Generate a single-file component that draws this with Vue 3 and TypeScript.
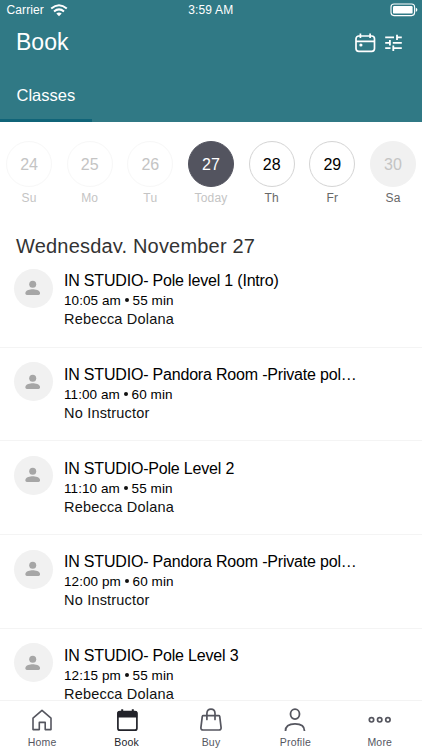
<script setup lang="ts">
interface Day { num: number; label: string; state: 'past' | 'today' | 'open' | 'closed' }
interface Lesson { title: string; time: string; minutes: number; teacher: string }

const days: Day[] = [
  { num: 24, label: 'Su', state: 'past' },
  { num: 25, label: 'Mo', state: 'past' },
  { num: 26, label: 'Tu', state: 'past' },
  { num: 27, label: 'Today', state: 'today' },
  { num: 28, label: 'Th', state: 'open' },
  { num: 29, label: 'Fr', state: 'open' },
  { num: 30, label: 'Sa', state: 'closed' },
]

const lessons: Lesson[] = [
  { title: 'IN STUDIO- Pole level 1 (Intro)', time: '10:05 am', minutes: 55, teacher: 'Rebecca Dolana' },
  { title: 'IN STUDIO- Pandora Room -Private pol…', time: '11:00 am', minutes: 60, teacher: 'No Instructor' },
  { title: 'IN STUDIO-Pole Level 2', time: '11:10 am', minutes: 55, teacher: 'Rebecca Dolana' },
  { title: 'IN STUDIO- Pandora Room -Private pol…', time: '12:00 pm', minutes: 60, teacher: 'No Instructor' },
  { title: 'IN STUDIO- Pole Level 3', time: '12:15 pm', minutes: 55, teacher: 'Rebecca Dolana' },
]
</script>

<template>
  <div class="screen">
    <header class="header">
      <div class="status">
        <div class="carrier">
          <span>Carrier</span>
          <svg width="18" height="13" viewBox="0 0 18 13" fill="none" stroke="#fff" stroke-width="2">
            <path d="M1.2 4.5Q9 -2 16.8 4.5M4 7.4Q9 3.3 14 7.4" />
            <path d="M6.3 9.5Q9 7.3 11.7 9.5L9 12.3Z" fill="#fff" stroke="none" />
          </svg>
        </div>
        <span class="clock">3:59 AM</span>
        <svg class="battery" width="28" height="14" viewBox="0 0 28 14" fill="none">
          <rect x="1" y="1" width="23.6" height="11.6" rx="3" stroke="#fff" stroke-width="1.1" />
          <rect x="3" y="3" width="19.6" height="7.6" rx="1.2" fill="#fff" />
          <path d="M25.8 4.7Q27.4 5.3 27.4 6.8T25.8 8.9Z" fill="#fff" />
        </svg>
      </div>
      <div class="title-row">
        <h1>Book</h1>
        <div class="actions">
          <svg width="21" height="20" viewBox="0 0 21 20" fill="none" stroke="#fff" stroke-width="1.7">
            <rect x="1" y="3" width="18.5" height="15.3" rx="2.8" />
            <path d="M1 8.4H19.5M5.4 .5V5M15.1 .5V5" />
            <circle cx="5.9" cy="12" r="1.6" fill="#fff" stroke="none" />
          </svg>
          <svg width="17" height="18" viewBox="0 0 17 18" fill="none" stroke="#fff" stroke-width="1.8">
            <path d="M.2 3.4H9M12 3.4H16.8M12 .7V6.1M.2 8.8H5M7.8 8.8H16.8M4.9 6.1V11.5M.2 14.2H5.5M8.3 14.2H16.8M8.3 11.5V16.9" />
          </svg>
        </div>
      </div>
      <nav class="tabs"><span class="tab">Classes</span></nav>
    </header>

    <section class="days">
      <div v-for="d in days" :key="d.num" class="day" :class="d.state">
        <span class="num">{{ d.num }}</span>
        <span class="label">{{ d.label }}</span>
      </div>
    </section>

    <main class="agenda">
      <h2>Wednesday, November 27</h2>
      <article v-for="(l, i) in lessons" :key="i" class="lesson">
        <div class="avatar">
          <svg width="16" height="16" viewBox="0 0 16 16" fill="#a6a6a6">
            <circle cx="7.7" cy="4.2" r="3.5" />
            <path d="M.4 13C.4 10.2 5.2 9.3 7.7 9.3S15 10.2 15 13V13.6Q15 15 13.6 15H1.8Q.4 15 .4 13.6Z" />
          </svg>
        </div>
        <div class="info">
          <h3>{{ l.title }}</h3>
          <p class="when">{{ l.time }} <i class="dot"></i> {{ l.minutes }} min</p>
          <p class="teacher">{{ l.teacher }}</p>
        </div>
      </article>
    </main>

    <nav class="bottom">
      <div class="item">
        <svg width="22" height="24" viewBox="0 0 22 24" fill="none" stroke="#55565f" stroke-width="1.6" stroke-linejoin="round">
          <path d="M2 10.2L11 2.3L20 10.2V21.6H14.2V14.4H8.3V21.6H2Z" />
        </svg>
        <span>Home</span>
      </div>
      <div class="item active">
        <svg width="22" height="24" viewBox="0 0 22 24" fill="none" stroke="#22232a" stroke-width="1.7">
          <rect x="1.9" y="3.6" width="19" height="18.6" rx="2" />
          <path d="M1.5 9.6V4.9Q1.5 2.9 3.5 2.9H19.3Q21.3 2.9 21.3 4.9V9.6Z" fill="#22232a" stroke="none" />
          <path d="M6.2 1.2V4M16.8 1.2V4" stroke-width="2" />
        </svg>
        <span>Book</span>
      </div>
      <div class="item">
        <svg width="24" height="24" viewBox="0 0 24 24" fill="none" stroke="#55565f" stroke-width="1.7" stroke-linecap="round" stroke-linejoin="round">
          <path d="M4.3 7.6H19.7Q20.5 7.6 20.7 8.4L22.1 19.7Q22.2 22 20 22H4Q1.8 22 1.9 19.7L3.3 8.4Q3.5 7.6 4.3 7.6Z" />
          <path d="M7.9 11.5V5.2Q8.2 1.2 12 1.2T16 5.2V11.5" />
        </svg>
        <span>Buy</span>
      </div>
      <div class="item">
        <svg width="22" height="24" viewBox="0 0 22 24" fill="none" stroke="#55565f" stroke-width="1.8">
          <ellipse cx="11" cy="6.1" rx="4.5" ry="5" />
          <path d="M1.5 23C1.5 18.6 4.2 15.9 11 15.9S20.5 18.6 20.5 23" />
        </svg>
        <span>Profile</span>
      </div>
      <div class="item">
        <svg width="24" height="24" viewBox="0 0 24 24" fill="none" stroke="#55565f" stroke-width="1.7">
          <circle cx="3.5" cy="11.8" r="2.2" /><circle cx="11.7" cy="11.8" r="2.2" /><circle cx="19.9" cy="11.8" r="2.2" />
        </svg>
        <span>More</span>
      </div>
    </nav>
  </div>
</template>

<style>
body { margin: 0; overflow: hidden; }
</style>

<style scoped>
.screen { width: 422px; height: 750px; display: flex; flex-direction: column; overflow: hidden; background: #fff; font-family: "Liberation Sans", Arial, sans-serif; color: #111; }
h1, h2, h3, p { margin: 0; font-weight: 400; white-space: nowrap; }
svg { display: block; flex: none; }
.header { flex: none; height: 122px; box-sizing: border-box; background: #307985; color: #fff; display: flex; flex-direction: column; }
.status { height: 20px; display: grid; grid-template-columns: 1fr auto 1fr; align-items: center; padding: 0 4px 0 6.5px; font-size: 12px; line-height: 20px; }
.carrier { display: flex; gap: 6px; align-items: center; letter-spacing: .1px; }
.clock { letter-spacing: .15px; margin: -1px 3px 0 0; }
.battery { justify-self: end; }
.title-row { height: 46px; display: flex; align-items: center; justify-content: space-between; padding: 0 20px 0 16px; }
h1 { font-size: 23px; line-height: 44px; margin-top: -2px; }
.actions { display: flex; align-items: center; gap: 9px; }
.tabs { flex: 1; display: flex; }
.tab { width: 92px; box-sizing: border-box; padding: 9px 0 0 16.5px; border-bottom: 3px solid #106478; font-size: 16.5px; line-height: 40px; }
.days { flex: none; height: 112px; box-sizing: border-box; padding-top: 19px; margin: 0 -1.3px; display: grid; grid-template-columns: repeat(7, 1fr); }
.day { display: flex; flex-direction: column; align-items: center; }
.num { width: 46px; height: 46px; box-sizing: border-box; border: 1px solid #f7f7f7; border-radius: 50%; font-size: 16px; line-height: 45px; text-align: center; color: #c4c4c4; }
.label { font-size: 12px; line-height: 16px; margin-top: 3px; color: #c4c4c4; letter-spacing: .2px; }
.today .num { background: #53545f; border-color: #53545f; color: #fff; }
.open .num { border-color: #d4d4d4; color: #000; }
.closed .num { background: #f1f1f1; border-color: #f1f1f1; }
.open .label, .closed .label { color: #686868; }
.agenda { flex: 1; min-height: 0; overflow: hidden; }
h2 { height: 19px; margin-bottom: .9px; overflow: hidden; padding-left: 16px; font-size: 20px; line-height: 24px; letter-spacing: .19px; color: #333; }
.lesson { height: 93.7px; box-sizing: border-box; border-bottom: 1px solid #f4f4f4; display: flex; padding: 14.7px 14px 0 13.6px; gap: 11.4px; }
.avatar { width: 39px; height: 39px; flex: none; border-radius: 50%; background: #f1f1f1; display: flex; align-items: center; justify-content: center; }
.info { min-width: 0; }
h3 { font-size: 16px; line-height: 22px; color: #000; margin-top: 1.6px; letter-spacing: -.19px; }
.when { font-size: 13.5px; line-height: 18px; letter-spacing: .08px; color: #000; }
.dot { display: inline-block; width: 4px; height: 4px; border-radius: 50%; background: #111; vertical-align: 3px; }
.teacher { font-size: 14.5px; line-height: 18.5px; letter-spacing: .2px; }
.bottom { flex: none; height: 50px; box-sizing: border-box; border-top: 1px solid #f3f3f3; background: #fff; display: grid; grid-template-columns: repeat(5, 1fr); }
.item { display: flex; flex-direction: column; align-items: center; padding-top: 7px; font-size: 10.5px; line-height: 12px; color: #55565f; letter-spacing: .2px; }
.item span { margin-top: 4px; }
.active { color: #22232a; }
</style>
